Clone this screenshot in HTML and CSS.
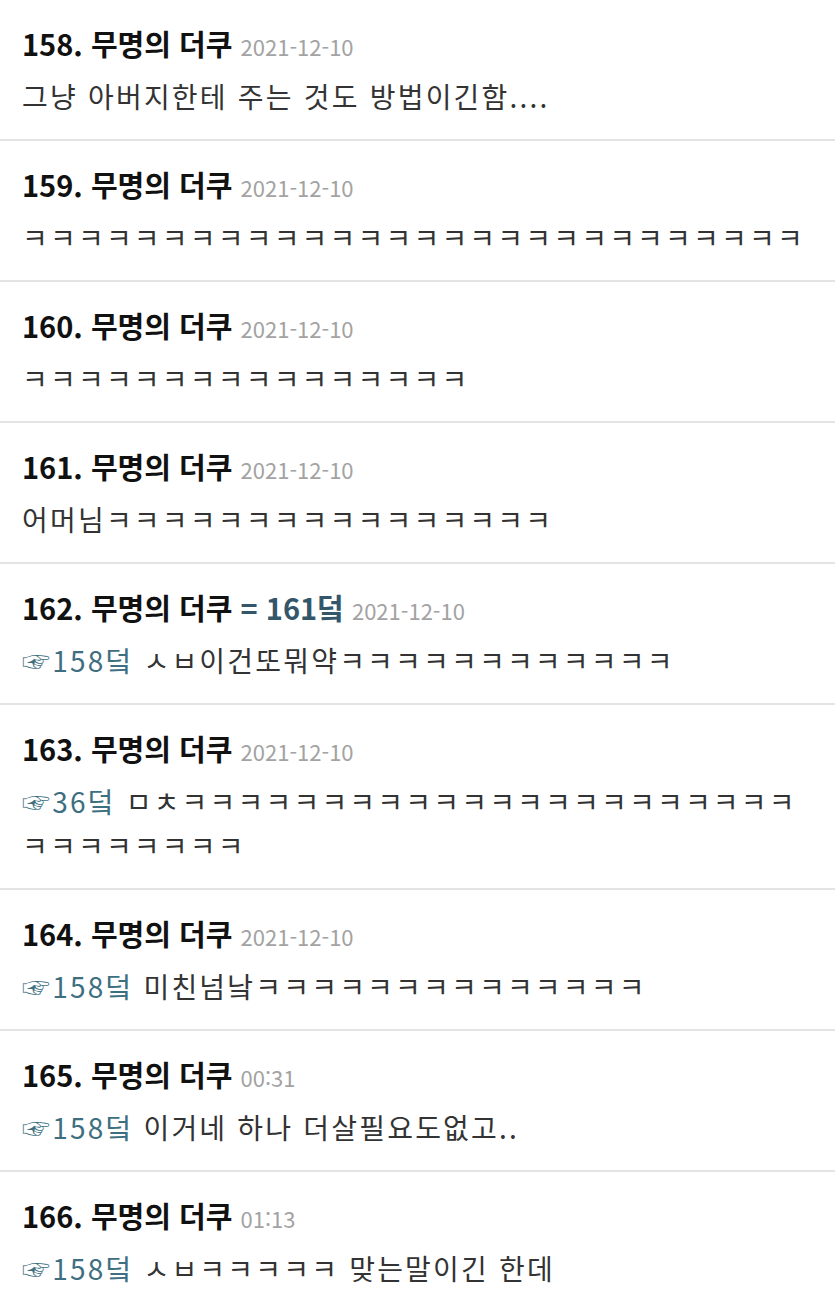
FILE: index.html
```html
<!DOCTYPE html>
<html lang="ko">
<head>
    <meta charset="UTF-8">
    <meta name="viewport" content="width=device-width, initial-scale=1.0">
    <title>댓글</title>
    <link rel="stylesheet" href="styles.css">
</head>
<body>
    <ul class="comments">
        <li class="comment">
            <div class="head"><span class="num">158.</span> 무명의 더쿠 <span class="date">2021-12-10</span></div>
            <p class="text">그냥 아버지한테 주는 것도 방법이긴함....</p>
        </li>
        <li class="comment">
            <div class="head"><span class="num">159.</span> 무명의 더쿠 <span class="date">2021-12-10</span></div>
            <p class="text">ㅋㅋㅋㅋㅋㅋㅋㅋㅋㅋㅋㅋㅋㅋㅋㅋㅋㅋㅋㅋㅋㅋㅋㅋㅋㅋㅋㅋ</p>
        </li>
        <li class="comment">
            <div class="head"><span class="num">160.</span> 무명의 더쿠 <span class="date">2021-12-10</span></div>
            <p class="text">ㅋㅋㅋㅋㅋㅋㅋㅋㅋㅋㅋㅋㅋㅋㅋㅋ</p>
        </li>
        <li class="comment">
            <div class="head"><span class="num">161.</span> 무명의 더쿠 <span class="date">2021-12-10</span></div>
            <p class="text">어머님ㅋㅋㅋㅋㅋㅋㅋㅋㅋㅋㅋㅋㅋㅋㅋㅋ</p>
        </li>
        <li class="comment">
            <div class="head"><span class="num">162.</span> 무명의 더쿠 <span class="same">= 161덬</span> <span class="date">2021-12-10</span></div>
            <p class="text"><a class="reply" href="#">☞158덬</a> ㅅㅂ이건또뭐약ㅋㅋㅋㅋㅋㅋㅋㅋㅋㅋㅋㅋ</p>
        </li>
        <li class="comment">
            <div class="head"><span class="num">163.</span> 무명의 더쿠 <span class="date">2021-12-10</span></div>
            <p class="text"><a class="reply" href="#">☞36덬</a> ㅁㅊㅋㅋㅋㅋㅋㅋㅋㅋㅋㅋㅋㅋㅋㅋㅋㅋㅋㅋㅋㅋㅋㅋㅋㅋㅋㅋㅋㅋㅋㅋ</p>
        </li>
        <li class="comment">
            <div class="head"><span class="num">164.</span> 무명의 더쿠 <span class="date">2021-12-10</span></div>
            <p class="text"><a class="reply" href="#">☞158덬</a> 미친넘낰ㅋㅋㅋㅋㅋㅋㅋㅋㅋㅋㅋㅋㅋㅋ</p>
        </li>
        <li class="comment">
            <div class="head"><span class="num">165.</span> 무명의 더쿠 <span class="date">00:31</span></div>
            <p class="text"><a class="reply" href="#">☞158덬</a> 이거네 하나 더살필요도없고..</p>
        </li>
        <li class="comment">
            <div class="head"><span class="num">166.</span> 무명의 더쿠 <span class="date">01:13</span></div>
            <p class="text"><a class="reply" href="#">☞158덬</a> ㅅㅂㅋㅋㅋㅋㅋ 맞는말이긴 한데</p>
        </li>
    </ul>
</body>
</html>
```

FILE: styles.css
```css
body {
    margin: 0;
    background-color: #ffffff;
    font-family: "Noto Sans CJK KR", "Noto Sans", sans-serif;
}
.comments {
    list-style: none;
    margin: 0;
    padding: 0;
}
.comment {
    padding: 21px 22px 21px;
    border-bottom: 2px solid #e4e4e4;
}
.head {
    font-size: 29px;
    line-height: 44px;
    font-weight: bold;
    color: #111111;
    white-space: nowrap;
}
.same {
    color: #34566b;
}
.date {
    font-size: 22px;
    line-height: 1;
    font-weight: normal;
    color: #a3a3a3;
}
.text {
    margin: 9px 0 0;
    font-size: 28px;
    line-height: 44px;
    letter-spacing: 2.2px;
    color: #333333;
    word-break: break-all;
}
.reply {
    color: #3d6f81;
    text-decoration: none;
}
```
